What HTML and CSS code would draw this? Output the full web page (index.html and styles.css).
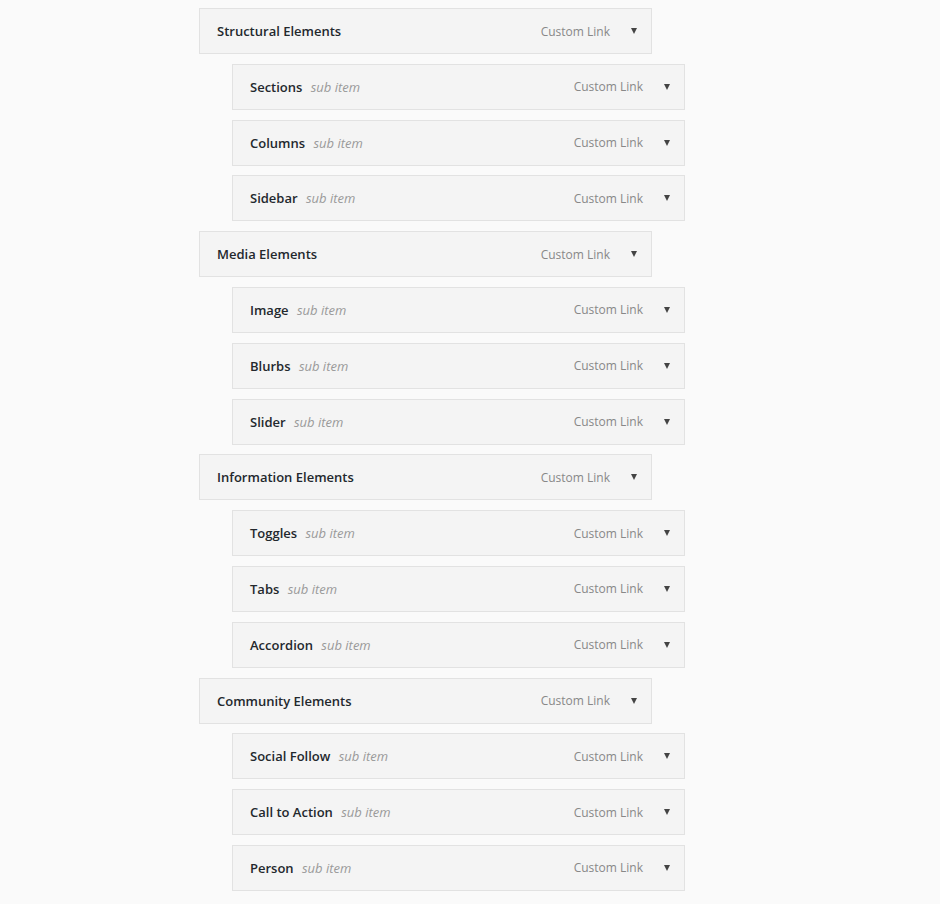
FILE: index.html
```html
<!DOCTYPE html>
<html lang="en">
<head>
  <meta charset="UTF-8" />
  <title>Menu Structure</title>
  <link rel="stylesheet" href="styles.css">
</head>
<body>

  <ul class="menu" id="menu-to-edit">
    <!-- Structural -->
    <li class="menu-item depth-0">
      <span class="item-title">Structural Elements</span>
      <span class="item-controls"><span class="item-type">Custom Link</span><span class="item-arrow"></span></span>
    </li>
    <li class="menu-item depth-1">
      <span class="item-title">Sections <em class="sub-label">sub item</em></span>
      <span class="item-controls"><span class="item-type">Custom Link</span><span class="item-arrow"></span></span>
    </li>
    <li class="menu-item depth-1">
      <span class="item-title">Columns <em class="sub-label">sub item</em></span>
      <span class="item-controls"><span class="item-type">Custom Link</span><span class="item-arrow"></span></span>
    </li>
    <li class="menu-item depth-1">
      <span class="item-title">Sidebar <em class="sub-label">sub item</em></span>
      <span class="item-controls"><span class="item-type">Custom Link</span><span class="item-arrow"></span></span>
    </li>

    <!-- Media -->
    <li class="menu-item depth-0">
      <span class="item-title">Media Elements</span>
      <span class="item-controls"><span class="item-type">Custom Link</span><span class="item-arrow"></span></span>
    </li>
    <li class="menu-item depth-1">
      <span class="item-title">Image <em class="sub-label">sub item</em></span>
      <span class="item-controls"><span class="item-type">Custom Link</span><span class="item-arrow"></span></span>
    </li>
    <li class="menu-item depth-1">
      <span class="item-title">Blurbs <em class="sub-label">sub item</em></span>
      <span class="item-controls"><span class="item-type">Custom Link</span><span class="item-arrow"></span></span>
    </li>
    <li class="menu-item depth-1">
      <span class="item-title">Slider <em class="sub-label">sub item</em></span>
      <span class="item-controls"><span class="item-type">Custom Link</span><span class="item-arrow"></span></span>
    </li>

    <!-- Information -->
    <li class="menu-item depth-0">
      <span class="item-title">Information Elements</span>
      <span class="item-controls"><span class="item-type">Custom Link</span><span class="item-arrow"></span></span>
    </li>
    <li class="menu-item depth-1">
      <span class="item-title">Toggles <em class="sub-label">sub item</em></span>
      <span class="item-controls"><span class="item-type">Custom Link</span><span class="item-arrow"></span></span>
    </li>
    <li class="menu-item depth-1">
      <span class="item-title">Tabs <em class="sub-label">sub item</em></span>
      <span class="item-controls"><span class="item-type">Custom Link</span><span class="item-arrow"></span></span>
    </li>
    <li class="menu-item depth-1">
      <span class="item-title">Accordion <em class="sub-label">sub item</em></span>
      <span class="item-controls"><span class="item-type">Custom Link</span><span class="item-arrow"></span></span>
    </li>

    <!-- Community -->
    <li class="menu-item depth-0">
      <span class="item-title">Community Elements</span>
      <span class="item-controls"><span class="item-type">Custom Link</span><span class="item-arrow"></span></span>
    </li>
    <li class="menu-item depth-1">
      <span class="item-title">Social Follow <em class="sub-label">sub item</em></span>
      <span class="item-controls"><span class="item-type">Custom Link</span><span class="item-arrow"></span></span>
    </li>
    <li class="menu-item depth-1">
      <span class="item-title">Call to Action <em class="sub-label">sub item</em></span>
      <span class="item-controls"><span class="item-type">Custom Link</span><span class="item-arrow"></span></span>
    </li>
    <li class="menu-item depth-1">
      <span class="item-title">Person <em class="sub-label">sub item</em></span>
      <span class="item-controls"><span class="item-type">Custom Link</span><span class="item-arrow"></span></span>
    </li>
  </ul>

</body>
</html>
```

FILE: styles.css
```css
body {
  font-family: 'Open Sans', 'Noto Sans', sans-serif;
  margin: 0;
  background: #fafafa;
  color: #23282d;
  min-height: 100vh;
}

.menu {
  list-style: none;
  margin: 0;
  padding: 8px 0 0 199px;
}

/* Jedna položka menu */
.menu-item {
  box-sizing: border-box;
  width: 453px;
  height: 46px;
  margin-bottom: 9.8px;
  padding: 0 14px 0 17px;
  display: flex;
  align-items: center;
  justify-content: space-between;
  background: #f4f4f4;
  border: 1px solid #e2e2e2;
}

.menu-item.depth-1 {
  margin-left: 33px;
}

.item-title {
  font-size: 13px;
  font-weight: 600;
}

.sub-label {
  font-weight: 400;
  font-style: italic;
  color: #9a9a9a;
  margin-left: 5px;
}

.item-controls {
  display: flex;
  align-items: center;
}

.item-type {
  font-size: 12px;
  color: #888;
}

.item-arrow {
  width: 0;
  height: 0;
  margin-left: 21px;
  border-left: 3.5px solid transparent;
  border-right: 3.5px solid transparent;
  border-top: 6px solid #444;
}
```
